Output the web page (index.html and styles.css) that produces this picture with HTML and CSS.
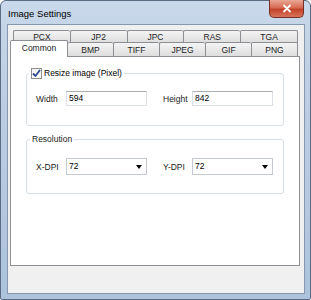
FILE: index.html
```html
<!DOCTYPE html>
<html lang="en">
<head>
    <meta charset="UTF-8">
    <title>Image Settings</title>
    <link rel="stylesheet" href="styles.css">
</head>
<body>

    <div class="window">
        <div class="titlebar">
            <span class="title">Image Settings</span>
            <button class="close-btn">
                <svg width="10" height="9" viewBox="0 0 10 9">
                    <path d="M2 1.5 L8 7.5 M8 1.5 L2 7.5" stroke="#fff" stroke-width="1.8" stroke-linecap="round"/>
                </svg>
            </button>
        </div>

        <div class="client">
            <div class="tab-row back">
                <div class="tab">PCX</div>
                <div class="tab">JP2</div>
                <div class="tab">JPC</div>
                <div class="tab">RAS</div>
                <div class="tab">TGA</div>
            </div>
            <div class="tab-row front">
                <div class="tab active">Common</div>
                <div class="tab">BMP</div>
                <div class="tab">TIFF</div>
                <div class="tab">JPEG</div>
                <div class="tab">GIF</div>
                <div class="tab">PNG</div>
            </div>

            <div class="panel">
                <!-- Resize group -->
                <fieldset class="group resize">
                    <legend class="check-legend">
                        <span class="checkbox">
                            <svg width="9" height="9" viewBox="0 0 9 9">
                                <path d="M1 4.5 L3.5 7 L8 1" fill="none" stroke="#2c4a8c" stroke-width="1.8"/>
                            </svg>
                        </span>
                        <span>Resize image (Pixel)</span>
                    </legend>
                    <div class="fields">
                        <span class="label">Width</span>
                        <div class="textbox">594</div>
                        <span class="label second">Height</span>
                        <div class="textbox">842</div>
                    </div>
                </fieldset>

                <!-- Resolution group -->
                <fieldset class="group resolution">
                    <legend class="text-legend">Resolution</legend>
                    <div class="fields">
                        <span class="label">X-DPI</span>
                        <div class="combo">72<span class="arrow"></span></div>
                        <span class="label second">Y-DPI</span>
                        <div class="combo">72<span class="arrow"></span></div>
                    </div>
                </fieldset>
            </div>
        </div>
    </div>

</body>
</html>
```

FILE: styles.css
```css
body {
    margin: 0;
    font-family: "Liberation Sans", Arial, sans-serif;
    font-size: 8.5px;
    color: #000;
    background-color: #fff;
}

.window {
    width: 311px;
    height: 300px;
    box-sizing: border-box;
    border: 1px solid #5b6d85;
    border-radius: 6px 6px 2px 2px;
    background: linear-gradient(to bottom, #c9d8ea, #b9cce2 40%, #adc3dc);
    padding: 0 5px 5px 6px;
    display: flex;
    flex-direction: column;
}

.titlebar {
    height: 23px;
    display: flex;
    align-items: flex-start;
}

.title {
    padding-left: 1px;
    line-height: 25px;
    font-size: 9.5px;
}

.close-btn {
    margin-left: auto;
    margin-right: 1px;
    margin-top: -1px;
    width: 35px;
    height: 18px;
    padding: 0;
    border: 1px solid #7a2f24;
    border-top: none;
    border-radius: 0 0 5px 5px;
    background: linear-gradient(to bottom, #e9a894, #d76a52 45%, #c3432c 55%, #d77358);
    display: flex;
    align-items: center;
    justify-content: center;
}

.client {
    flex: 1;
    background-color: #f0f0f0;
    border: 1px solid #8797ad;
    padding: 5px 4px 0 2px;
    display: flex;
    flex-direction: column;
}

.tab-row {
    display: flex;
    align-items: flex-start;
    width: 288px;
}

.tab-row.back {
    margin-left: 3px;
    width: 285px;
}

.tab-row.front {
    margin-top: -1px;
}

.tab {
    flex: 1;
    box-sizing: border-box;
    height: 13px;
    line-height: 12px;
    text-align: center;
    color: #222;
    border: 1px solid #8c8e94;
    border-right: none;
    border-bottom: none;
    border-radius: 2px 2px 0 0;
    background: linear-gradient(to bottom, #f4f4f4, #e8e8e8 50%, #dcdcdc);
}

.tab:last-child {
    border-right: 1px solid #8c8e94;
}

.front .tab {
    height: 15px;
    line-height: 14px;
}

.front .tab.active {
    flex: none;
    width: 58px;
    height: 17px;
    margin-top: -2px;
    line-height: 15px;
    background: #fff;
    border-right: 1px solid #8c8e94;
    position: relative;
    z-index: 1;
}

.front .tab.active + .tab {
    border-left: none;
}

.panel {
    height: 210px;
    box-sizing: border-box;
    margin-top: -1px;
    background-color: #fff;
    border: 1px solid #8c8e94;
    padding: 9px 15px 0;
}

.group {
    width: 258px;
    box-sizing: border-box;
    margin: 0;
    padding: 0 9px;
    border: 1px solid #d5dfe5;
    border-radius: 3px;
}

.group.resize {
    height: 60px;
}

.group.resolution {
    height: 62px;
    margin-top: 6px;
}

.group legend {
    height: 14px;
    line-height: 14px;
    padding: 0 2px;
}

.check-legend {
    display: flex;
    align-items: center;
    gap: 2px;
    margin-left: -7px;
}

.text-legend {
    margin-left: -6px;
    color: #222;
}

.checkbox {
    width: 11px;
    height: 11px;
    box-sizing: border-box;
    border: 1px solid #8f8f8f;
    background: linear-gradient(to bottom, #f4f4f4, #fff);
    display: flex;
    align-items: center;
    justify-content: center;
}

.fields {
    display: flex;
    align-items: center;
}

.resize .fields {
    margin-top: 11px;
}

.resolution .fields {
    margin-top: 12px;
}

.label {
    width: 30px;
    white-space: nowrap;
    color: #222;
}

.label.second {
    width: 29px;
    margin-left: 16px;
}

.textbox,
.combo {
    width: 81px;
    box-sizing: border-box;
    background-color: #fff;
    border: 1px solid #dbdfe6;
    border-top-color: #abadb3;
    padding-left: 2px;
}

.textbox {
    height: 15px;
    line-height: 13px;
}

.combo {
    height: 17px;
    line-height: 15px;
    border-color: #c5c9d0;
    display: flex;
    justify-content: space-between;
    align-items: center;
    padding-right: 4px;
}

.arrow {
    width: 0;
    height: 0;
    border-left: 3px solid transparent;
    border-right: 3px solid transparent;
    border-top: 4px solid #000;
}
```
